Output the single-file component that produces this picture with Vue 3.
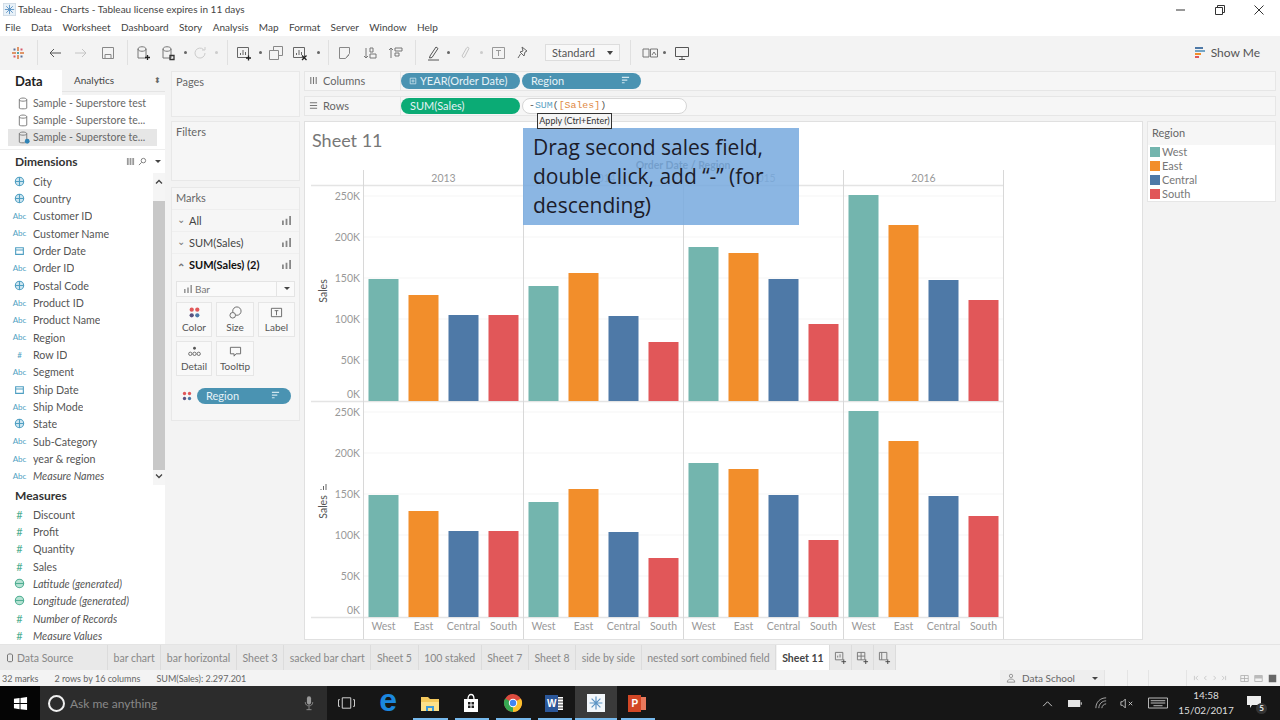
<script setup>
const menus = ['File','Data','Worksheet','Dashboard','Story','Analysis','Map','Format','Server','Window','Help']
const cyl = 'M3 4c0-3 8-3 8 0v9H3zM3 4c0 3 8 3 8 0'
const toolbar = [
  { w: 26, kind: 'logo' },
  { w: 12, kind: 'sep' },
  { w: 24, d: 'M14 8H3M7 4L3 8l4 4', c: '#555' },
  { w: 28, d: 'M2 8h11M9 4l4 4-4 4', c: '#c4c4c4' },
  { w: 26, d: 'M2.5 2.5h11v11h-11zM5 13.5v-4h6v4', c: '#888' },
  { w: 12, kind: 'sep' },
  { w: 20, d: cyl, c: '#777', d2: 'M10 12.5h5M12.5 10v5', c2: '#222' },
  { w: 30, d: cyl, c: '#777', d2: 'M10 10.5h4v4h-4z', c2: '#333' },
  { w: 4, kind: 'dot' },
  { w: 26, d: 'M13 8a5 5 0 1 1-1.5-3.5M13 2v3h-3', c: '#ccc' },
  { w: 6, kind: 'dot', light: true },
  { w: 16, kind: 'sep' },
  { w: 18, d: 'M1.5 2.5h11v10h-11zM4.5 10V8M7 10V5M9.5 10V7', c: '#666', d2: 'M10 13h5M12.5 10.5v5', c2: '#222' },
  { w: 14, kind: 'dot' },
  { w: 18, d: 'M1.5 5.5h9v9h-9zM5.5 5.5v-4h9v9h-4', c: '#888' },
  { w: 30, d: 'M1.5 2.5h11v10h-11zM4.5 10V8M7 10V5M9.5 10V7', c: '#666', d2: 'M10 10.5l4.5 4.5M14.5 10.5L10 15', c2: '#222' },
  { w: 6, kind: 'dot' },
  { w: 14, kind: 'sep' },
  { w: 20, d: 'M2.5 2.5h10v6l-4 5h-6zM12 10l-3 3', c: '#888' },
  { w: 32, d: 'M3 3v10M1 11l2 2 2-2M7 3h3v4H7zM7 9h6v4H7z', c: '#777' },
  { w: 18, d: 'M3 13V3M1 5l2-2 2 2M7 3h7v3H7zM7 8h4v3H7z', c: '#777' },
  { w: 20, kind: 'sep' },
  { w: 18, d: 'M4 11L10 2l2 1.5-6 9-2.5.5zM2 15h11', c: '#555' },
  { w: 10, kind: 'dot' },
  { w: 24, d: 'M5 11L9.5 3c1-1.5 3-.5 2.200 1L7.500 12c-.8 1.200-2.500.3-2-1', c: '#c4c4c4' },
  { w: 8, kind: 'dot', light: true },
  { w: 28, d: 'M1.500 2.500h12v11h-12zM5 5.500h5M7.500 5.500V11', c: '#999' },
  { w: 20, d: 'M7 2l5 4-2 1-1 4-4-4 3-1zM5.500 9L3 13', c: '#666' },
  { w: 12, kind: 'gap' },
  { w: 75, kind: 'select' },
  { w: 20, kind: 'sep' },
  { w: 20, d: 'M1 4h6v8H1zM8.500 4h7v8h-7zM10 10l2-3 2 3', c: '#777' },
  { w: 8, kind: 'dot' },
  { w: 28, d: 'M1.500 2.500h13v9h-13zM8 11.500v3M5 14.500h6', c: '#555' }
]
const sources = [
  { name: 'Sample - Superstore test' },
  { name: 'Sample - Superstore te...' },
  { name: 'Sample - Superstore te...', active: true }
]
const dims = [
  ['g','City'],['g','Country'],['a','Customer ID'],['a','Customer Name'],['d','Order Date'],['a','Order ID'],
  ['g','Postal Code'],['a','Product ID'],['a','Product Name'],['a','Region'],['n','Row ID'],['a','Segment'],
  ['d','Ship Date'],['a','Ship Mode'],['g','State'],['a','Sub-Category'],['a','year & region',false,true],['a','Measure Names',true]
]
const meas = [
  ['n','Discount'],['n','Profit'],['n','Quantity'],['n','Sales'],['g','Latitude (generated)',true],
  ['g','Longitude (generated)',true],['n','Number of Records',true,true],['n','Measure Values',true]
]
const tabs = ['bar chart','bar horizontal','Sheet 3','sacked bar chart','Sheet 5','100 staked','Sheet 7','Sheet 8','side by side','nested sort combined field']
const legend = [['West','#73b5ae'],['East','#f28e2b'],['Central','#4e79a7'],['South','#e15759']]
const colors = legend.map(l => l[1])
const names = legend.map(l => l[0])
const panes = [364, 524, 684, 844]
const years = ['2013', '2014', '2015', '2016']
const top1 = [[279,295,315,315],[286,273,316,342],[247,253,279,324],[195,225,280,300]]
const top2 = [[495,511,531,531],[502,489,532,558],[463,469,495,540],[411,441,496,516]]
const bars = []
const xlabels = []
panes.forEach((px, p) => {
  for (let i = 0; i < 4; i++) {
    const x = px + 4.5 + i * 40
    bars.push({ x, y: top1[p][i], h: 401 - top1[p][i], f: colors[i] })
    bars.push({ x, y: top2[p][i], h: 617 - top2[p][i], f: colors[i] })
    xlabels.push({ x: x + 15, t: names[i] })
  }
})
const ticks = ['250K','200K','150K','100K','50K']
const gridYs = [196,237,278,319,360,412,453,494,535,576]
</script>

<template>
  <div class="root">
    <header class="title">
      <svg class="ticon" viewBox="0 0 14 14"><rect x=".5" y=".5" width="13" height="13" fill="#e8f1f8" stroke="#cfdbe6"/><path d="M7 2v10M2 7h10M3.500 3.500l7 7M10.500 3.500l-7 7" stroke="#5b93c4" fill="none"/></svg>
      <span class="ttext">Tableau - Charts - Tableau license expires in 11 days</span>
      <span class="winbtns">
        <svg viewBox="0 0 12 12"><path d="M1 6h9" stroke="#333" fill="none"/></svg>
        <svg viewBox="0 0 12 12"><path d="M1.500 3.500h7v7h-7zM3.500 3.500v-2h7v7h-2" stroke="#333" fill="none"/></svg>
        <svg viewBox="0 0 12 12"><path d="M1.500 1.500l9 9M10.500 1.500l-9 9" stroke="#333" fill="none"/></svg>
      </span>
    </header>
    <nav class="menu"><span v-for="m in menus" :key="m">{{ m }}</span></nav>

    <div class="toolbar">
      <template v-for="(t, i) in toolbar" :key="i">
        <span class="cell" :style="{ width: t.w + 'px' }">
          <i v-if="t.kind === 'sep'" class="vsep"></i>
          <i v-else-if="t.kind === 'dot'" class="tdot" :class="{ light: t.light }"></i>
          <svg v-else-if="t.kind === 'logo'" class="ic" viewBox="0 0 16 16">
            <path d="M8 2v4M8 10v4M2 8h4M10 8h4" stroke="#d9773a" fill="none" stroke-width="1.500"/>
            <path d="M3.500 3.500h2v2h-2zM10.500 10.500h2v2h-2z" fill="#5b6f96"/>
            <path d="M10.500 3.500h2v2h-2zM3.500 10.500h2v2h-2z" fill="#d5586b"/>
            <path d="M7 7h2v2H7z" fill="#55a4a4"/>
          </svg>
          <span v-else-if="t.kind === 'select'" class="std">Standard<i class="caret"></i></span>
          <svg v-else-if="t.d" class="ic" viewBox="0 0 16 16">
            <path :d="t.d" :stroke="t.c" fill="none"/>
            <path v-if="t.d2" :d="t.d2" :stroke="t.c2" fill="none" stroke-width="1.300"/>
          </svg>
        </span>
      </template>
      <span class="showme">
        <svg class="ic" viewBox="0 0 12 16"><path d="M1 2h8v2H1z" fill="#4e79a7"/><path d="M1 5h10v2H1z" fill="#73a5c6"/><path d="M1 8h6v2H1z" fill="#f28e2b"/><path d="M1 11h4v2H1z" fill="#e15759"/></svg>
        Show Me
      </span>
    </div>

    <main class="main">
      <aside class="data">
        <div class="dtabs">
          <b class="dtab">Data</b>
          <span class="atab">Analytics<i class="updown">⬍</i></span>
        </div>
        <div class="sources">
          <div v-for="(s, i) in sources" :key="i" class="src" :class="{ on: s.active }">
            <svg viewBox="0 0 14 14" class="srcic"><path d="M2.500 3c0-2.500 8-2.500 8 0v9c0 1-8 1-8 0zM2.500 3c0 2 8 2 8 0" stroke="#777" fill="none"/><circle v-if="s.active" cx="11" cy="11" r="2.600" fill="#2f83b5"/></svg>
            {{ s.name }}
          </div>
        </div>
        <div class="dhead"><b>Dimensions</b>
          <span class="dtools">
            <svg viewBox="0 0 10 10"><path d="M1 1h2v8H1zM4 1h2v8H4zM7 1h2v8H7z" fill="#999"/></svg>
            <svg viewBox="0 0 10 10"><circle cx="6" cy="4" r="2.500" stroke="#777" fill="none"/><path d="M4 6L1 9" stroke="#777"/></svg>
            <i class="caret small"></i>
          </span>
        </div>
        <div class="dimwrap">
          <div class="list">
            <div v-for="f in dims" :key="f[1]" class="field" :class="{ it: f[2] }">
              <span class="ft blue" :class="{ calc: f[3] }">
                <template v-if="f[0] === 'a'">Abc</template>
                <template v-else-if="f[0] === 'n'">#</template>
                <svg v-else-if="f[0] === 'g'" viewBox="0 0 10 10"><circle cx="5" cy="5" r="3.800" stroke="#4f9fc2" fill="#cfe6f1"/><path d="M1 5h8M5 1v8" stroke="#4f9fc2"/></svg>
                <svg v-else viewBox="0 0 10 10"><path d="M1.500 2.500h7v6h-7zM1.500 4.500h7" stroke="#4f9fc2" fill="none"/></svg>
              </span>
              <span class="fname">{{ f[1] }}</span>
            </div>
          </div>
          <div class="scroll">
            <svg viewBox="0 0 12 10"><path d="M3 6.500l3-3 3 3" stroke="#444" fill="none" stroke-width="1.300"/></svg>
            <i class="thumb"></i>
            <svg viewBox="0 0 12 10"><path d="M3 3.500l3 3 3-3" stroke="#444" fill="none" stroke-width="1.300"/></svg>
          </div>
        </div>
        <div class="mhead"><b>Measures</b></div>
        <div class="mlist">
          <div v-for="f in meas" :key="f[1]" class="field" :class="{ it: f[2] }">
            <span class="ft green" :class="{ calc: f[3] }">
              <template v-if="f[0] === 'n'">#</template>
              <svg v-else viewBox="0 0 10 10"><circle cx="5" cy="5" r="3.800" stroke="#4fae92" fill="#b6e2d3"/><path d="M1 5h8" stroke="#4fae92"/></svg>
            </span>
            <span class="fname">{{ f[1] }}</span>
          </div>
        </div>
      </aside>

      <section class="side">
        <div class="card pages"><h4>Pages</h4></div>
        <div class="card filters"><h4>Filters</h4></div>
        <div class="card marks">
          <h4>Marks</h4>
          <div class="mrow"><span class="chev">⌄</span>All<svg class="bar" viewBox="0 0 10 10"><path d="M0 5h2v5H0zM4 3h2v7H4zM8 0h2v10H8z" fill="#888"/></svg></div>
          <div class="mrow"><span class="chev">⌄</span>SUM(Sales)<svg class="bar" viewBox="0 0 10 10"><path d="M0 5h2v5H0zM4 3h2v7H4zM8 0h2v10H8z" fill="#888"/></svg></div>
          <div class="mrow strong"><span class="chev up">⌃</span>SUM(Sales) (2)<svg class="bar" viewBox="0 0 10 10"><path d="M0 5h2v5H0zM4 3h2v7H4zM8 0h2v10H8z" fill="#888"/></svg></div>
          <div class="marktype">
            <svg viewBox="0 0 10 10"><path d="M0 5h2v5H0zM4 3h2v7H4zM8 0h2v10H8z" fill="#999"/></svg>
            <span>Bar</span><i class="mdiv"></i><i class="caret small"></i>
          </div>
          <div class="mbtns">
            <div class="mbtn">
              <svg viewBox="0 0 14 14"><circle cx="4" cy="4" r="2.300" fill="#e15759"/><circle cx="10" cy="4" r="2.300" fill="#e15759"/><circle cx="4" cy="10" r="2.300" fill="#59517f"/><circle cx="10" cy="10" r="2.300" fill="#4e79a7"/></svg>
              Color
            </div>
            <div class="mbtn">
              <svg viewBox="0 0 14 14"><circle cx="8.500" cy="5.500" r="4.500" stroke="#666" fill="none"/><circle cx="4" cy="10" r="3" stroke="#666" fill="#f5f5f5"/></svg>
              Size
            </div>
            <div class="mbtn">
              <svg viewBox="0 0 14 14"><path d="M1.500 2.500h11v9h-11zM5 5h4M7 5v5" stroke="#666" fill="none"/></svg>
              Label
            </div>
            <div class="mbtn">
              <svg viewBox="0 0 14 14"><circle cx="7" cy="3.500" r="1.500" fill="#555"/><circle cx="2.500" cy="9.500" r="1.800" stroke="#666" fill="none"/><circle cx="7" cy="9.500" r="1.800" stroke="#666" fill="none"/><circle cx="11.500" cy="9.500" r="1.800" stroke="#666" fill="none"/></svg>
              Detail
            </div>
            <div class="mbtn">
              <svg viewBox="0 0 14 14"><path d="M1.500 2.500h11v7h-5l-2 2.500v-2.500h-4z" stroke="#666" fill="none"/></svg>
              Tooltip
            </div>
          </div>
          <div class="regionrow">
            <svg viewBox="0 0 12 12"><circle cx="3" cy="3" r="2" fill="#e15759"/><circle cx="9" cy="3" r="2" fill="#e15759"/><circle cx="3" cy="9" r="2" fill="#59517f"/><circle cx="9" cy="9" r="2" fill="#4e79a7"/></svg>
            <span class="pill blue-p">Region<svg class="sorti" viewBox="0 0 10 10"><path d="M1 1.500h8M1 4.500h6M1 7.500h3" stroke="#cfe6ef" fill="none" stroke-width="1.300"/></svg></span>
          </div>
        </div>
      </section>

      <section class="work">
        <div class="shelf">
          <span class="slabel"><svg viewBox="0 0 10 10"><path d="M2 1v8M5 1v8M8 1v8" stroke="#777" fill="none" stroke-width="1.200"/></svg>Columns</span>
          <span class="pill blue-p p118 center-l"><svg class="plus" viewBox="0 0 10 10"><path d="M1.500 1.500h7v7h-7zM3 5h4M5 3v4" stroke="#cfe6ef" fill="none"/></svg>YEAR(Order Date)</span>
          <span class="pill blue-p p119">Region<svg class="sorti" viewBox="0 0 10 10"><path d="M1 1.500h8M1 4.500h6M1 7.500h3" stroke="#cfe6ef" fill="none" stroke-width="1.300"/></svg></span>
        </div>
        <div class="shelf">
          <span class="slabel"><svg viewBox="0 0 10 10"><path d="M1 2h8M1 5h8M1 8h8" stroke="#777" fill="none" stroke-width="1.200"/></svg>Rows</span>
          <span class="pill green-p p118">SUM(Sales)</span>
          <span class="formula"><span class="minus">-</span><span class="fn">SUM</span>(<span class="arg">[Sales]</span>)</span>
          <span class="apply">Apply (Ctrl+Enter)</span>
        </div>
        <div class="stage">
          <div class="sheet">
            <div class="callout">Drag second sales field, double click, add “-” (for descending)</div>
            <svg class="chart" viewBox="305 122 837 517">
              <text x="312" y="147" class="stitle">Sheet 11</text>
              <text x="683" y="169" class="hdr" text-anchor="middle">Order Date  /  Region</text>
              <g v-for="y in gridYs" :key="y"><path :d="`M364 ${y}H1003`" stroke="#f5f5f5"/></g>
              <path d="M311 185.500H1004M311 401.500H1004M311 617.500H1004" stroke="#e4e4e4" fill="none" stroke-width="1.500"/>
              <path d="M363.500 170V639M523.500 170V639M683.500 170V639M843.500 170V639M1003.500 170V639" stroke="#d8d8d8" fill="none"/>
              <text v-for="(yr, i) in years" :key="yr" :x="panes[i] + 79.500" y="182" class="tick" text-anchor="middle">{{ yr }}</text>
              <rect v-for="(b, i) in bars" :key="i" :x="b.x" :y="b.y" width="30" :height="b.h" :fill="b.f"/>
              <g v-for="(t, i) in ticks" :key="t">
                <text x="360" :y="200 + i * 41" class="tick" text-anchor="end">{{ t }}</text>
                <text x="360" :y="416 + i * 41" class="tick" text-anchor="end">{{ t }}</text>
              </g>
              <text x="360" y="398" class="tick" text-anchor="end">0K</text>
              <text x="360" y="614" class="tick" text-anchor="end">0K</text>
              <text transform="translate(327 291) rotate(-90)" class="axis" text-anchor="middle">Sales</text>
              <text transform="translate(327 507) rotate(-90)" class="axis" text-anchor="middle">Sales</text>
              <path d="M321 490v-1M323.500 490v-4M326 490v-6" stroke="#666" fill="none"/>
              <text v-for="(l, i) in xlabels" :key="i" :x="l.x" y="630" class="tick" text-anchor="middle">{{ l.t }}</text>
            </svg>
          </div>
          <div class="legend">
            <h5>Region</h5>
            <div v-for="l in legend" :key="l[0]" class="lrow"><i class="sw" :style="{ background: l[1] }"></i>{{ l[0] }}</div>
          </div>
        </div>
      </section>
    </main>

    <div class="tabs">
      <span class="tab first"><svg viewBox="0 0 10 10"><path d="M2.500 2c0-1.500 5-1.500 5 0v6c0 1-5 1-5 0z" stroke="#777" fill="none"/></svg>Data Source</span>
      <span v-for="t in tabs" :key="t" class="tab">{{ t }}</span>
      <span class="tab active">Sheet 11</span>
      <span class="tab ti"><svg viewBox="0 0 14 14"><path d="M1.500 1.500h8v8h-8zM4 7V5M6.500 7V3.500" stroke="#777" fill="none"/><path d="M8 11.500h5M10.500 9v5" stroke="#444" fill="none"/></svg></span>
      <span class="tab ti"><svg viewBox="0 0 14 14"><path d="M1.500 1.500h8v8h-8zM1.500 5.500h8M5.500 1.500v8" stroke="#777" fill="none"/><path d="M8 11.500h5M10.500 9v5" stroke="#444" fill="none"/></svg></span>
      <span class="tab ti"><svg viewBox="0 0 14 14"><path d="M1.500 1.500h8v8h-8zM4 1.500v8" stroke="#777" fill="none"/><path d="M8 11.500h5M10.500 9v5" stroke="#444" fill="none"/></svg></span>
    </div>

    <div class="status">
      <span class="st1">32 marks</span><span class="st2">2 rows by 16 columns</span><span>SUM(Sales): 2.297.201</span>
      <span class="user">
        <svg viewBox="0 0 12 12"><circle cx="6" cy="3.500" r="2" stroke="#888" fill="none"/><path d="M1.500 11c0-5 9-5 9 0z" stroke="#888" fill="none"/></svg>
        Data School<i class="caret small"></i>
      </span>
      <i class="stsep s1"></i><i class="stsep s2"></i><i class="stsep s3"></i>
      <span class="navs">
        <svg viewBox="0 0 48 10"><path d="M2 2v6M7 2L4 5l3 3M19 2l-3 3 3 3M29 2l3 3-3 3M41 2l3 3-3 3M46 2v6" stroke="#bbb" fill="none"/></svg>
      </span>
      <span class="views">
        <svg viewBox="0 0 12 10"><path d="M1 1h10v8H1zM1 5h10M6 1v8" stroke="#aaa" fill="none"/></svg>
        <svg viewBox="0 0 12 10"><path d="M1 1h10v8H1z" stroke="#aaa" fill="none"/><path d="M1 1h10v4H1z" fill="#bbb"/></svg>
        <svg viewBox="0 0 12 10"><path d="M1 0h10v10H1z" fill="#666"/></svg>
      </span>
    </div>

    <footer class="taskbar">
      <span class="start"><svg viewBox="0 0 16 16"><path d="M1 3l6-1v5.500H1zM8 2l7-1v6.500H8zM1 8.500h6V14l-6-1zM8 8.500h7V15l-7-1z" fill="#fff"/></svg></span>
      <span class="search">
        <i class="cortana"></i>
        <span class="ask">Ask me anything</span>
        <svg class="mic" viewBox="0 0 12 18"><rect x="3.500" y="1" width="5" height="10" rx="2.500" fill="#999"/><path d="M1.500 8c0 6 9 6 9 0M6 13v4M3 17h6" stroke="#999" fill="none"/></svg>
      </span>
      <span class="task tv"><svg viewBox="0 0 18 14"><path d="M4.500 1.500h9v11h-9zM2 3.500H.5v7H2M16 3.500h1.500v7H16" stroke="#ddd" fill="none"/></svg></span>
      <span class="task edge">e</span>
      <span class="task u">
        <svg viewBox="0 0 20 18"><path d="M1 3h7l2 2h9v12H1z" fill="#f4c95d"/><path d="M1 8h18v9H1z" fill="#fbe08a"/><path d="M6 12h8v5h-2v-3H8v3H6z" fill="#3d9ad9"/></svg>
      </span>
      <span class="task u">
        <svg viewBox="0 0 18 20"><path d="M2 6h14v13H2z" fill="#fff"/><path d="M6 6c0-6 6-6 6 0" stroke="#fff" fill="none" stroke-width="1.300"/><path d="M6 9h2.500v2.500H6zM9.500 9H12v2.500H9.500zM6 12.500h2.500V15H6zM9.500 12.500H12V15H9.500z" fill="#222"/></svg>
      </span>
      <span class="task u">
        <svg viewBox="0 0 20 20"><circle cx="10" cy="10" r="9" fill="#dd4b3e"/><path d="M10 10L2.200 5.500A9 9 0 0 0 10 19z" fill="#36a852"/><path d="M10 10l7.800-4.500A9 9 0 0 1 10 19z" fill="#fbc02d"/><circle cx="10" cy="10" r="4.200" fill="#fff"/><circle cx="10" cy="10" r="3.200" fill="#4285f4"/></svg>
      </span>
      <span class="task u word"><b>W</b><i class="lines"></i></span>
      <span class="task u on">
        <span class="tableau"><svg viewBox="0 0 20 20"><path d="M10 2v16M2 10h16M4.500 4.500l11 11M15.500 4.500l-11 11" stroke="#5b93c4" fill="none" stroke-width="1.500"/></svg></span>
      </span>
      <span class="task u ppt"><b>P</b><i class="lines"></i></span>

      <span class="tray">
        <svg class="t1" viewBox="0 0 12 8"><path d="M1 7l5-5 5 5" stroke="#ddd" fill="none"/></svg>
        <svg class="t2" viewBox="0 0 16 10"><path d="M0 1h14v8H0z" fill="#e4e4e4"/><path d="M14.500 3.500h1.500v3h-1.500z" fill="#aaa"/></svg>
        <svg class="t3" viewBox="0 0 14 14"><path d="M1 13C1 6 6 1 13 1M4.500 13c0-5 4-8.500 8.500-8.500M8 13c0-2.500 2.500-5 5-5" stroke="#bbb" fill="none"/></svg>
        <svg class="t4" viewBox="0 0 16 12"><path d="M1 4h2l3-3v10L3 8H1z" stroke="#ccc" fill="none"/><path d="M10 4l4 4M14 4l-4 4" stroke="#ccc" fill="none"/></svg>
        <svg class="t5" viewBox="0 0 22 12"><path d="M.5.500h21v11H.500zM3 3.500h16M3 6h16M6 9h10" stroke="#ccc" fill="none"/></svg>
        <span class="clock"><span>14:58</span><span>15/02/2017</span></span>
        <span class="note">
          <svg viewBox="0 0 14 12"><path d="M0 0h14v9H5l-2 3V9H0z" fill="#eee"/></svg>
          <b>5</b>
        </span>
      </span>
    </footer>
  </div>
</template>

<style>
html, body { margin: 0; padding: 0; background: #fff; }
</style>

<style scoped>
.root { width: 1280px; height: 720px; overflow: hidden; display: flex; flex-direction: column; font-family: Lato, "Open Sans", sans-serif; color: #555; background: #f3f3f3; position: relative; }
.title { height: 19px; background: #fff; display: flex; align-items: center; padding-left: 3px; font: 10px Lato, sans-serif; color: #444; }
.ticon { width: 13px; height: 13px; margin-right: 2px; }
.winbtns { margin-left: auto; display: flex; gap: 27px; padding-right: 15px; padding-top: 2px; }
.winbtns svg { width: 12px; height: 12px; }
.menu { height: 17px; background: #fff; display: flex; align-items: center; gap: 10.400px; padding-left: 5px; font: 10px Lato, sans-serif; color: #444; }
.toolbar { height: 34px; padding-left: 5px; display: flex; align-items: center; background: #f3f3f3; }
.cell { display: flex; justify-content: center; align-items: center; height: 100%; flex: none; }
.ic { width: 16px; height: 16px; flex: none; }
.vsep { width: 1px; height: 25px; background: #e0e0e0; }
.tdot { width: 3px; height: 3px; background: #666; border-radius: 50%; }
.tdot.light { background: #ccc; }
.std { width: 75px; height: 17px; box-sizing: border-box; border: 1px solid #ddd; background: #f8f8f8; display: flex; align-items: center; justify-content: space-between; padding: 0 6px 0 6px; font-size: 11px; color: #555; }
.caret { width: 0; height: 0; border: 3.500px solid transparent; border-top: 4px solid #444; border-bottom: 0; display: inline-block; }
.caret.small { border-width: 3px; border-top-width: 3.500px; border-bottom: 0; }
.showme { margin-left: auto; margin-right: 20px; display: flex; align-items: center; gap: 3px; font-size: 12px; color: #555; }

.main { height: 575px; display: flex; }
.data { width: 165px; background: #fff; display: flex; flex-direction: column; flex: none; }
.dtabs { height: 25px; display: flex; background: #f3f3f3; }
.dtab { width: 62px; padding-left: 15px; box-sizing: border-box; background: #fff; color: #222; font-size: 13px; line-height: 22px; }
.atab { flex: 1; height: 22px; display: flex; align-items: center; justify-content: space-between; padding: 0 4px 0 12px; font-size: 10px; color: #444; background: #f3f3f3; border-bottom: 1px solid #e4e4e4; box-sizing: border-box; }
.updown { font-style: normal; font-size: 8px; color: #666; }
.sources { height: 55px; box-sizing: border-box; border-bottom: 1px solid #eee; padding-left: 8px; padding-right: 8px; }
.src { height: 17px; display: flex; align-items: center; gap: 3px; padding-left: 9px; font-size: 10.500px; color: #666; white-space: nowrap; }
.src.on { background: #e6e6e6; }
.srcic { width: 13px; height: 13px; flex: none; }
.dhead { height: 23px; display: flex; align-items: center; justify-content: space-between; padding: 0 4px 0 15px; font-size: 12px; color: #333; box-sizing: border-box; }
.dhead b, .mhead b { font-weight: 700; color: #333; font-size: 12px; }
.dtools { display: flex; align-items: center; gap: 3px; }
.dtools svg { width: 9px; height: 9px; }
.dtools .caret { margin-left: 5px; }
.dimwrap { display: flex; height: 312px; }
.list { flex: 1; }
.scroll { width: 12px; display: flex; flex-direction: column; background: #f5f5f5; }
.scroll svg { width: 12px; height: 10px; margin: 4px 0; flex: none; }
.thumb { flex: 1; background: #c8c8c8; margin: 10px 0 -3px; }
.mhead { height: 21px; padding-left: 15px; display: flex; align-items: center; }
.mlist { flex: 1; }
.field { height: 17.330px; display: flex; align-items: center; font-size: 10.700px; color: #555; white-space: nowrap; }
.field.it { font-style: italic; }
.ft { width: 33px; padding-left: 9px; padding-right: 3px; box-sizing: border-box; display: flex; justify-content: center; align-items: center; font-size: 8px; font-style: normal; flex: none; }
.ft svg { width: 11px; height: 11px; flex: none; }
.blue { color: #4f9fc2; }
.green { color: #4fae92; font-size: 11px; }
.calc { position: relative; }
.fname { overflow: hidden; }

.side { width: 129px; margin-left: 6px; margin-right: 4px; margin-top: 1px; display: flex; flex-direction: column; flex: none; }
.card { background: #f6f6f6; border: 1px solid #e8e8e8; box-sizing: border-box; }
.card h4 { margin: 0; font-weight: 400; font-size: 11px; color: #666; padding: 3px 4px; }
.pages { height: 46px; margin-bottom: 4px; }
.filters { height: 60px; margin-bottom: 6px; }
.marks { height: 234px; }
.marks h4 { height: 22px; box-sizing: border-box; padding-top: 3px; border-bottom: 1px solid #eee; }
.mrow { height: 22px; display: flex; align-items: center; padding: 0 8px 0 5px; font-size: 11px; color: #444; border-bottom: 1px solid #efefef; box-sizing: border-box; }
.mrow.strong { color: #111; font-weight: 700; border-bottom: 0; }
.chev { width: 12px; font-size: 10px; color: #777; line-height: 8px; height: 10px; }
.chev.up { line-height: 14px; }
.bar { width: 9px; height: 9px; margin-left: auto; }
.marktype { margin: 5px 4px 0; height: 16px; display: flex; align-items: center; background: #fafafa; border: 1px solid #e4e4e4; box-sizing: border-box; padding: 0 4px 0 7px; font-size: 10px; color: #777; gap: 3px; }
.marktype svg { width: 8px; height: 8px; }
.mdiv { width: 1px; height: 14px; background: #e4e4e4; margin-left: auto; margin-right: 4px; }
.mbtns { margin: 5px 4px 0; display: grid; grid-template-columns: 36px 38px 37px; column-gap: 4px; row-gap: 4px; grid-auto-rows: 35px; }
.mbtn { background: #f9f9f9; border: 1px solid #e6e6e6; box-sizing: border-box; display: flex; flex-direction: column; align-items: center; justify-content: center; gap: 2px; font-size: 10px; color: #555; }
.mbtn svg { width: 13px; height: 13px; }
.regionrow { margin: 12px 8px 0 10px; display: flex; align-items: center; gap: 5px; }
.regionrow > svg { width: 10px; height: 10px; flex: none; }

.pill { height: 16px; border-radius: 8px; color: #e6f2f7; font-size: 11px; display: flex; align-items: center; padding: 0 9px; box-sizing: border-box; flex: none; font-weight: 400; }
.regionrow .pill { flex: 1; }
.blue-p { background: #4a93b2; }
.green-p { background: #0bab75; }
.p118 { width: 119px; }
.p119 { width: 119px; margin-left: 2px; }
.center-l { padding-left: 8px; gap: 3px; }
.sorti { width: 9px; height: 9px; margin-left: auto; margin-right: 2px; }
.plus { width: 8px; height: 8px; }

.work { flex: 1; display: flex; flex-direction: column; margin-top: 1px; margin-right: 4px; min-width: 0; }
.shelf { height: 20px; margin-bottom: 5px; background: #f6f6f6; border: 1px solid #e6e6e6; box-sizing: border-box; display: flex; align-items: center; position: relative; overflow: visible; }
.slabel { width: 96px; display: flex; align-items: center; gap: 5px; padding-left: 4px; font-size: 11px; color: #666; box-sizing: border-box; border-right: 1px solid #e6e6e6; height: 100%; flex: none; }
.slabel svg { width: 9px; height: 9px; }
.formula { width: 165px; height: 16px; border-radius: 8px; background: #fff; border: 1px solid #d6d6d6; margin-left: 2px; box-sizing: border-box; padding-left: 6px; font: 9.900px "Liberation Mono", monospace; color: #555; display: flex; align-items: center; flex: none; }
.minus { color: #444; }
.fn { color: #5da3c4; }
.arg { color: #e0893f; }
.apply { position: absolute; left: 232px; top: 16px; z-index: 5; height: 16px; width: 75px; box-sizing: border-box; border: 1px solid #333; background: #f5f5f5; font-size: 9px; color: #333; display: flex; align-items: center; justify-content: center; white-space: nowrap; }
.stage { flex: 1; display: flex; gap: 4px; height: 519px; }
.sheet { width: 839px; height: 519px; background: #fff; border: 1px solid #e0e0e0; box-sizing: border-box; position: relative; flex: none; }
.chart { display: block; width: 837px; height: 517px; font-family: Lato, sans-serif; }
.stitle { font-size: 18px; fill: #777; }
.hdr { font-size: 10.500px; fill: #555; font-weight: 700; }
.tick { font-size: 10.500px; fill: #999; }
.axis { font-size: 10.500px; fill: #555; }
.callout { position: absolute; left: 218px; top: 6px; z-index: 2; width: 276px; height: 97px; box-sizing: border-box; padding: 5px 10px; background: rgba(120, 170, 222, .86); font: 21px/29px "Open Sans", sans-serif; color: #1c1c2a; }
.legend { flex: 1; height: 81px; background: #fff; border: 1px solid #e6e6e6; box-sizing: border-box; padding: 0 0 0 2px; }
.legend h5 { margin: 0 0 0 -2px; padding-left: 4px; height: 23px; background: #f6f6f6; font-weight: 400; font-size: 11px; color: #666; line-height: 22px; }
.lrow { height: 14px; display: flex; align-items: center; gap: 2px; font-size: 11px; color: #777; }
.sw { width: 10px; height: 10px; flex: none; }

.tabs { height: 26px; display: flex; align-items: stretch; background: #f3f3f3; font-size: 10.500px; color: #888; border-top: 1px solid #e4e4e4; box-sizing: border-box; }
.tab { padding: 0 5.600px; display: flex; align-items: center; background: #e9e9e9; border-right: 1px solid #dcdcdc; white-space: nowrap; flex: none; }
.tab.first { width: 108px; box-sizing: border-box; gap: 2px; padding-left: 5px; }
.tab.first svg { width: 10px; height: 10px; }
.tab.active { background: #fff; color: #444; font-weight: 700; padding: 0 5px; margin-left: 1px; }
.ti { width: 21px; padding: 0; justify-content: center; }
.ti svg { width: 13px; height: 13px; }
.status { height: 16px; background: #f3f3f3; display: flex; align-items: center; padding-left: 2px; font-size: 9px; color: #666; }
.st1 { margin-right: 16px; }
.st2 { margin-right: 16px; }
.user { margin-left: auto; width: 105px; height: 100%; box-sizing: border-box; display: flex; align-items: center; gap: 6px; padding: 0 6px; background: #eee; position: relative; color: #666; font-size: 10px; border-right: 1px solid #e4e4e4; }
.user svg { width: 10px; height: 10px; }
.user .caret { margin-left: auto; }
.stsep { width: 1px; height: 100%; background: #e4e4e4; }
.s1 { margin-left: 22px; }
.s2 { margin-left: 20px; }
.s3 { margin-left: 37px; }
.navs { margin-left: 6px; }
.navs svg { width: 34px; height: 8px; display: block; }
.views { display: flex; gap: 5px; margin-left: 13px; margin-right: 3px; }
.views svg { width: 9px; height: 9px; }

.taskbar { height: 34px; background: #161616; display: flex; align-items: stretch; flex: none; position: relative; }
.start { width: 40px; background: #050505; display: flex; align-items: center; justify-content: center; }
.start svg { width: 15px; height: 15px; }
.search { width: 287px; background: #2c2c2c; display: flex; align-items: center; padding-left: 8px; box-sizing: border-box; position: relative; }
.cortana { width: 13px; height: 13px; border: 2.500px solid #f0f0f0; border-radius: 50%; background: #2c2c2c; }
.ask { margin-left: 5px; font: 12px Lato, sans-serif; color: #888; }
.mic { position: absolute; right: 13px; top: 9px; width: 10px; height: 16px; }
.task { width: 41.500px; display: flex; align-items: center; justify-content: center; box-sizing: border-box; position: relative; flex: none; }
.task svg { width: 20px; height: 20px; }
.tv { margin-left: -1px; }
.tv svg { width: 17px; height: 14px; }
.edge { color: #1b87df; font: 700 32px/30px "Liberation Sans", sans-serif; padding-bottom: 6px; }
.u::after { content: ""; position: absolute; left: 4px; right: 3px; bottom: 0; height: 2px; background: #76b9ed; }
.on { background: #3a3a3a; }
.on::after { left: 0; right: 0; }
.tableau { width: 18px; height: 18px; background: #f2f6fa; display: flex; align-items: center; justify-content: center; }
.tableau svg { width: 16px; height: 16px; }
.word, .ppt { gap: 0; }
.word b, .ppt b { width: 13px; height: 17px; color: #fff; font: 700 10px/17px "Liberation Sans", sans-serif; text-align: center; }
.word b { background: #2b579a; }
.ppt b { background: #d24726; }
.lines { width: 5px; height: 13px; background: repeating-linear-gradient(#fff 0 1px, #999 1px 3px); }
.ppt .lines { background: #e9795c; }
.tray { margin-left: auto; display: flex; align-items: center; color: #ddd; font: 10px Lato, sans-serif; position: relative; padding-right: 13px; }
.t1 { width: 11px; height: 7px; margin-right: 15px; }
.t2 { width: 14px; height: 9px; margin-right: 13px; }
.t3 { width: 12px; height: 12px; margin-right: 13px; }
.t4 { width: 14px; height: 11px; margin-right: 14px; }
.t5 { width: 20px; height: 12px; margin-right: 12px; }
.clock { display: flex; flex-direction: column; align-items: center; line-height: 15px; margin-right: 15px; width: 52px; }
.note { position: relative; width: 20px; height: 18px; }
.note svg { width: 14px; height: 12px; position: absolute; left: 0; top: 2px; }
.note b { position: absolute; right: 0; bottom: -2px; width: 11px; height: 11px; border-radius: 50%; background: #333; font-size: 8px; line-height: 11px; text-align: center; color: #eee; }
</style>
